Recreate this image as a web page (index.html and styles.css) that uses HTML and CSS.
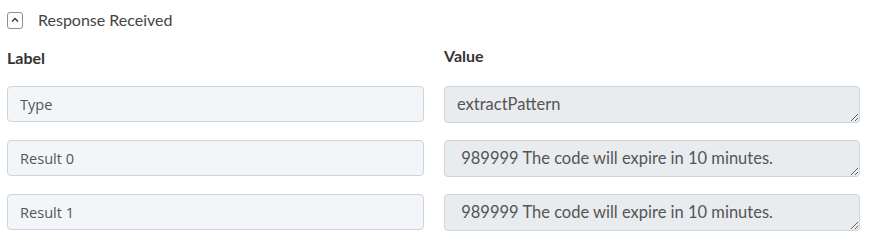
FILE: index.html
```html
<!DOCTYPE html>
<html lang="en">
<head>
  <meta charset="UTF-8" />
  <title>Response Received</title>
  <link rel="stylesheet" href="styles.css">
</head>
<body>
  <div class="section">
    <div class="section-head">
      <span class="toggle">
        <svg width="8" height="6" viewBox="0 0 8 6"><path d="M1 4.5 L4 1.5 L7 4.5" fill="none" stroke="#333" stroke-width="1.4"/></svg>
      </span>
      <span class="section-title">Response Received</span>
    </div>

    <div class="fields">
      <div class="col-head">Label</div>
      <div class="col-head value-head">Value</div>

      <input class="label-input" type="text" value="Type" />
      <textarea class="value-input" rows="1" disabled>extractPattern</textarea>

      <input class="label-input" type="text" value="Result 0" />
      <textarea class="value-input" rows="1" disabled> 989999 The code will expire in 10 minutes.</textarea>

      <input class="label-input" type="text" value="Result 1" />
      <textarea class="value-input" rows="1" disabled> 989999 The code will expire in 10 minutes.</textarea>
    </div>
  </div>
</body>
</html>
```

FILE: styles.css
```css
body {
  margin: 0;
  padding: 0 17px 0 7px;
  font-family: Lato, "Open Sans", sans-serif;
  background: #fff;
  color: #333;
}
.section-head {
  display: flex;
  align-items: center;
  gap: 15px;
  height: 38px;
}
.toggle {
  width: 14px;
  height: 15px;
  margin-top: 2px;
  border: 1px solid #8a8f96;
  border-radius: 3px;
  display: flex;
  align-items: center;
  justify-content: center;
}
.section-title {
  font-size: 16px;
  color: #444;
}
.fields {
  display: grid;
  grid-template-columns: 417px 416px;
  column-gap: 20px;
  row-gap: 17px;
  margin-top: 10px;
}
.col-head {
  font-size: 16px;
  font-weight: bold;
  color: #333;
  line-height: 18px;
  padding-top: 1px;
  margin-bottom: 2px;
}
.value-head {
  margin-top: -2px;
}
.label-input {
  box-sizing: border-box;
  height: 36px;
  width: 100%;
  margin: 0;
  padding: 0 12px;
  font-family: "Open Sans", sans-serif;
  font-size: 14.6px;
  color: #555;
  background: #f3f6f9;
  border: 1px solid #cfd4db;
  border-radius: 4px;
  outline: none;
}
.value-input {
  box-sizing: border-box;
  height: 37px;
  width: 100%;
  margin: 0;
  padding: 6px 12px;
  font-family: Lato, sans-serif;
  font-size: 16.5px;
  line-height: 22px;
  color: #555;
  background: #e9ecef;
  border: 1px solid #ced4da;
  border-radius: 4px;
  resize: vertical;
  overflow: hidden;
}
```
